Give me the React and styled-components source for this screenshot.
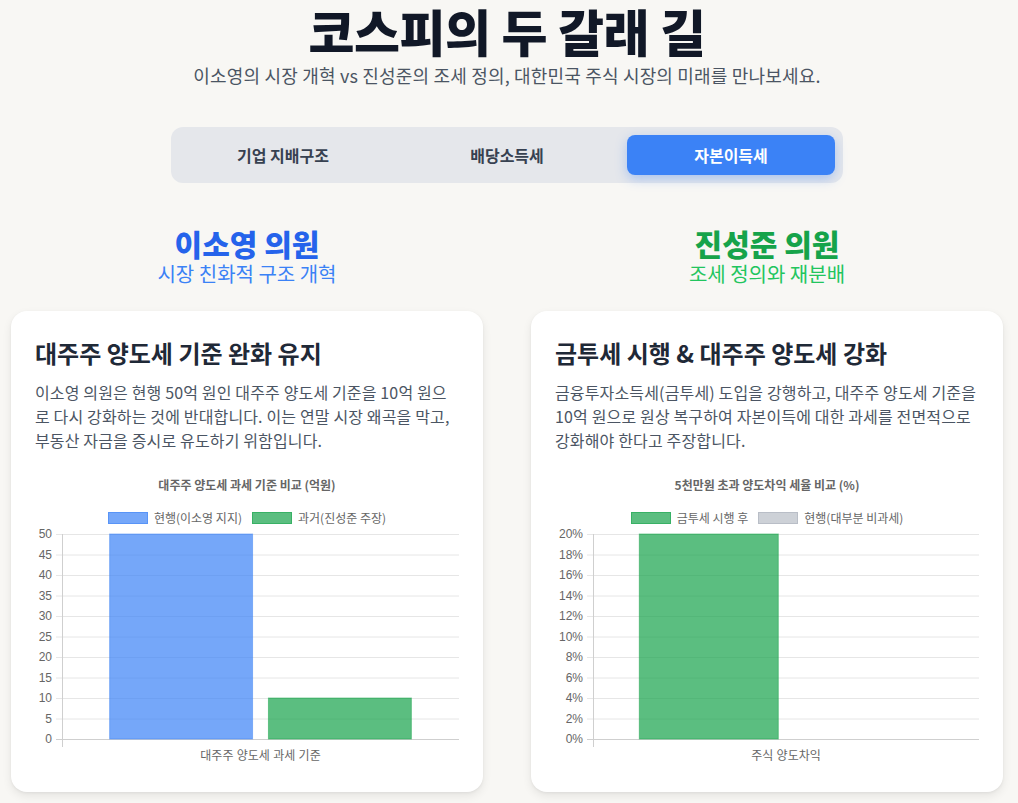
import React from 'react';
import styled, { createGlobalStyle } from 'styled-components';

const GlobalStyle = createGlobalStyle`
  body {
    margin: 0;
    background: #f8f7f4;
    font-family: "Noto Sans CJK KR", "Noto Sans", sans-serif;
    color: #1f2937;
  }
`;

const Page = styled.div`
  padding: 0 15px 12px 11px;
`;

const Header = styled.header`
  text-align: center;
`;

const Title = styled.h1`
  margin: 0;
  font-size: 50px;
  line-height: 60px;
  font-weight: 900;
  letter-spacing: -0.5px;
  color: #111827;
`;

const Subtitle = styled.p`
  margin: 1px 0 0;
  font-size: 18px;
  line-height: 28px;
  letter-spacing: 0.18px;
  color: #4b5563;
`;

const TabBar = styled.nav`
  width: 672px;
  box-sizing: border-box;
  margin: 38px auto 0;
  padding: 8px;
  display: grid;
  grid-template-columns: repeat(3, 1fr);
  gap: 16px;
  background: #e5e7eb;
  border-radius: 12px;
`;

const Tab = styled.button`
  height: 40px;
  border: 0;
  border-radius: 8px;
  font-family: inherit;
  font-size: 16px;
  font-weight: 700;
  cursor: pointer;
  background: ${p => (p.$active ? '#3b82f6' : 'transparent')};
  color: ${p => (p.$active ? '#ffffff' : '#374151')};
  box-shadow: ${p => (p.$active ? '0 4px 12px rgba(59,130,246,0.35)' : 'none')};
`;

const Columns = styled.div`
  margin-top: 42px;
  display: grid;
  grid-template-columns: 1fr 1fr;
  gap: 48px;
`;

const Column = styled.section`
  display: flex;
  flex-direction: column;
`;

const Person = styled.div`
  text-align: center;
  margin-bottom: 24px;
`;

const PersonName = styled.h2`
  margin: 0;
  font-size: 30px;
  line-height: 36px;
  font-weight: 800;
  color: ${p => p.$color};
`;

const PersonTag = styled.p`
  margin: 0;
  font-size: 20px;
  line-height: 26px;
  color: ${p => p.$color};
`;

const Card = styled.article`
  background: #fff;
  border-radius: 16px;
  padding: 24px;
  box-shadow: 0 4px 10px rgba(0, 0, 0, 0.08), 0 1px 3px rgba(0, 0, 0, 0.05);
`;

const CardTitle = styled.h3`
  margin: 0;
  font-size: 24px;
  line-height: 36px;
  font-weight: 700;
  color: #1f2937;
`;

const CardText = styled.p`
  margin: 9px 0 0;
  font-size: 16px;
  line-height: 24px;
  letter-spacing: 0.15px;
  color: #4b5563;
`;

const ChartBox = styled.div`
  margin-top: 25px;
  display: flex;
  flex-direction: column;
`;

const ChartTitle = styled.div`
  text-align: center;
  font-size: 12px;
  line-height: 16px;
  font-weight: 700;
  color: #666;
`;

const Legend = styled.div`
  margin-top: 17px;
  display: flex;
  justify-content: center;
  gap: 10px;
  font-size: 12px;
  line-height: 16px;
  color: #666;
`;

const LegendItem = styled.span`
  display: flex;
  align-items: center;
  gap: 6px;
`;

const Swatch = styled.i`
  display: block;
  width: 40px;
  height: 12px;
  box-sizing: border-box;
  background: ${p => p.$fill};
  border: 1px solid ${p => p.$stroke};
`;

const Plot = styled.svg`
  display: block;
  flex: none;
`;

const fontStack = '"Liberation Sans", "Noto Sans CJK KR", sans-serif';

function BarChart({ title, legend, ticks, fmt, max, bars, axisX, category }) {
  const W = 424;
  const H = 242;
  const top = 8;
  const bottom = 213;
  const right = W;
  const span = right - axisX;
  const slot = (span * 0.8) / bars.length;
  const barW = slot * 0.9;
  const y = v => bottom - (v / max) * (bottom - top);

  return (
    <ChartBox>
      <ChartTitle>{title}</ChartTitle>
      <Legend>
        {legend.map(l => (
          <LegendItem key={l.label}>
            <Swatch $fill={l.fill} $stroke={l.stroke} />
            {l.label}
          </LegendItem>
        ))}
      </Legend>
      <Plot width={W} height={H} viewBox={`0 0 ${W} ${H}`}>
        {ticks.map(t => (
          <g key={t}>
            <line x1={axisX - 6} x2={right} y1={y(t) + 0.5} y2={y(t) + 0.5}
              stroke={t === 0 ? '#cfcfcf' : '#e6e6e6'} />
            <text x={axisX - 10} y={y(t) + 4} textAnchor="end" fontSize="12"
              fill="#666" fontFamily={fontStack}>{fmt(t)}</text>
          </g>
        ))}
        <line x1={axisX + 0.5} x2={axisX + 0.5} y1={top} y2={bottom + 8} stroke="#cfcfcf" />
        {bars.map((b, i) => {
          const x = axisX + span * 0.1 + slot * i + slot * 0.05;
          return b.value > 0 ? (
            <rect key={i} x={x} y={y(b.value)} width={barW} height={bottom - y(b.value)}
              fill={b.fill} stroke={b.stroke} strokeWidth="1" />
          ) : null;
        })}
        <text x={axisX + span / 2} y={234} textAnchor="middle" fontSize="12"
          fill="#666" fontFamily={fontStack}>{category}</text>
      </Plot>
    </ChartBox>
  );
}

const blue = { fill: 'rgba(59,130,246,0.7)', stroke: 'rgba(59,130,246,0.5)' };
const green = { fill: 'rgba(22,163,74,0.7)', stroke: 'rgba(22,163,74,0.5)' };
const grey = { fill: 'rgba(156,163,175,0.5)', stroke: 'rgba(156,163,175,0.4)' };

export default function App() {
  const tabs = ['기업 지배구조', '배당소득세', '자본이득세'];
  return (
    <Page>
      <GlobalStyle />
      <Header>
        <Title>코스피의 두 갈래 길</Title>
        <Subtitle>이소영의 시장 개혁 vs 진성준의 조세 정의, 대한민국 주식 시장의 미래를 만나보세요.</Subtitle>
      </Header>

      <TabBar>
        {tabs.map((t, i) => (
          <Tab key={t} $active={i === 2}>{t}</Tab>
        ))}
      </TabBar>

      <Columns>
        <Column>
          <Person>
            <PersonName $color="#2563eb">이소영 의원</PersonName>
            <PersonTag $color="#3b82f6">시장 친화적 구조 개혁</PersonTag>
          </Person>
          <Card>
            <CardTitle>대주주 양도세 기준 완화 유지</CardTitle>
            <CardText>
              이소영 의원은 현행 50억 원인 대주주 양도세 기준을 10억 원으로 다시 강화하는 것에 반대합니다. 이는 연말 시장 왜곡을 막고, 부동산 자금을 증시로 유도하기 위함입니다.
            </CardText>
            <BarChart
              title="대주주 양도세 과세 기준 비교 (억원)"
              legend={[
                { label: '현행(이소영 지지)', ...blue },
                { label: '과거(진성준 주장)', ...green },
              ]}
              ticks={[0, 5, 10, 15, 20, 25, 30, 35, 40, 45, 50]}
              fmt={v => String(v)}
              max={50}
              axisX={27}
              bars={[{ value: 50, ...blue }, { value: 10, ...green }]}
              category="대주주 양도세 과세 기준"
            />
          </Card>
        </Column>

        <Column>
          <Person>
            <PersonName $color="#16a34a">진성준 의원</PersonName>
            <PersonTag $color="#22c55e">조세 정의와 재분배</PersonTag>
          </Person>
          <Card>
            <CardTitle>금투세 시행 &amp; 대주주 양도세 강화</CardTitle>
            <CardText>
              금융투자소득세(금투세) 도입을 강행하고, 대주주 양도세 기준을 10억 원으로 원상 복구하여 자본이득에 대한 과세를 전면적으로 강화해야 한다고 주장합니다.
            </CardText>
            <BarChart
              title="5천만원 초과 양도차익 세율 비교 (%)"
              legend={[
                { label: '금투세 시행 후', ...green },
                { label: '현행(대부분 비과세)', ...grey },
              ]}
              ticks={[0, 2, 4, 6, 8, 10, 12, 14, 16, 18, 20]}
              fmt={v => `${v}%`}
              max={20}
              axisX={38}
              bars={[{ value: 20, ...green }, { value: 0, ...grey }]}
              category="주식 양도차익"
            />
          </Card>
        </Column>
      </Columns>
    </Page>
  );
}
